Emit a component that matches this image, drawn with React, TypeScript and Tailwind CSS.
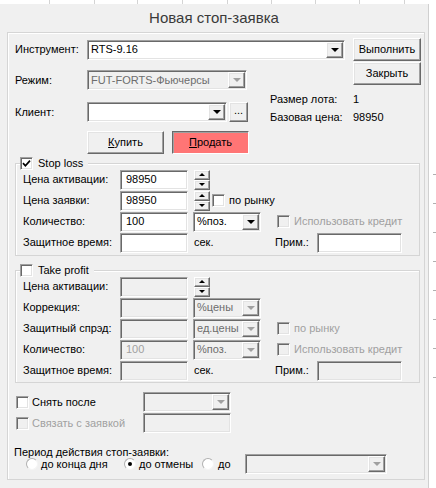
import type { ReactNode } from "react";

// classic win32 3D edges
const sunken =
  "border border-t-[#a0a0a0] border-l-[#a0a0a0] border-b-white border-r-white shadow-[inset_1px_1px_0_#696969,inset_-1px_-1px_0_#e3e3e3]";
const raised =
  "border border-t-white border-l-white border-b-[#696969] border-r-[#696969] shadow-[inset_-1px_-1px_0_#a0a0a0,inset_1px_1px_0_#e3e3e3] bg-[#f0f0f0]";

function Arrow({ disabled, up }: { disabled?: boolean; up?: boolean }) {
  if (up) {
    return (
      <div className="w-0 h-0 border-l-[3px] border-r-[3px] border-b-[3px] border-l-transparent border-r-transparent border-b-black" />
    );
  }
  return (
    <div
      className={
        disabled
          ? "w-0 h-0 border-l-[4px] border-r-[4px] border-t-[4px] border-l-transparent border-r-transparent border-t-[#a0a0a0]"
          : "w-0 h-0 border-l-[4px] border-r-[4px] border-t-[4px] border-l-transparent border-r-transparent border-t-black"
      }
    />
  );
}

function Combo({ w, value, disabled }: { w: string; value?: string; disabled?: boolean }) {
  return (
    <div
      className={`${w} h-[20px] shrink-0 flex items-center ${sunken} ${
        disabled ? "bg-[#f0f0f0] text-[#6d6d6d]" : "bg-white text-black"
      }`}
    >
      <span className="flex-1 pl-[3px] whitespace-nowrap overflow-hidden">{value}</span>
      <div className={`w-[17px] h-[16px] mr-[1px] flex items-center justify-center ${raised}`}>
        <Arrow disabled={disabled} />
      </div>
    </div>
  );
}

function Input({ w, value, disabled }: { w: string; value?: string; disabled?: boolean }) {
  return (
    <div
      className={`${w} h-[20px] shrink-0 flex items-center pl-[5px] ${sunken} ${
        disabled ? "bg-[#f0f0f0] text-[#a0a0a0]" : "bg-white text-black"
      }`}
    >
      {value}
    </div>
  );
}

function Spin() {
  return (
    <div className="w-[16px] h-[20px] shrink-0 flex flex-col">
      <div className={`h-[10px] flex items-center justify-center ${raised}`}>
        <Arrow up />
      </div>
      <div className={`h-[10px] flex items-center justify-center ${raised}`}>
        <div className="w-0 h-0 border-l-[3px] border-r-[3px] border-t-[3px] border-l-transparent border-r-transparent border-t-black" />
      </div>
    </div>
  );
}

function Check({ checked, disabled }: { checked?: boolean; disabled?: boolean }) {
  return (
    <div
      className={`w-[13px] h-[13px] shrink-0 flex items-center justify-center ${sunken} ${
        disabled ? "bg-[#f0f0f0]" : "bg-white"
      }`}
    >
      {checked && (
        <svg width="9" height="9" viewBox="0 0 9 9">
          <path d="M1 4.2 L3.4 6.8 L8 1.6" stroke="#000" strokeWidth="1.7" fill="none" />
        </svg>
      )}
    </div>
  );
}

function Radio({ checked }: { checked?: boolean }) {
  return (
    <div className="w-[12px] h-[12px] shrink-0 rounded-full bg-white border border-t-[#b0b0b0] border-l-[#b0b0b0] border-b-[#f4f4f4] border-r-[#f4f4f4] flex items-center justify-center">
      {checked && <div className="w-[4px] h-[4px] rounded-full bg-black" />}
    </div>
  );
}

function Row({ label, children }: { label: string; children: ReactNode }) {
  return (
    <div className="h-[21px] flex items-center">
      <span className="w-[97px] shrink-0">{label}</span>
      {children}
    </div>
  );
}

function Group({ title, checked, children, h }: { title: string; checked?: boolean; children: ReactNode; h: string }) {
  return (
    <div
      className={`relative w-[405px] ${h} border border-[#d5d5d5] shadow-[inset_1px_1px_0_#ffffff] pl-[7px] pt-[5px]`}
    >
      <div className="absolute top-[-7px] left-[4px] flex items-center bg-[#f0f0f0] pr-[5px]">
        <Check checked={checked} />
        <span className="ml-[5px] leading-[13px]">{title}</span>
      </div>
      {children}
    </div>
  );
}

const GRID = [50, 45, 43, 45, 45, 44, 44, 44, 45];

export default function App() {
  return (
    <div className="w-[436px] h-[488px] bg-white flex flex-col overflow-hidden font-['Liberation_Sans',Arial,sans-serif] text-[11px] text-black">
      <div className="h-[4px] flex shrink-0">
        {GRID.map((w, i) => (
          <div key={i} className="h-full border-r border-[#d4d4d4]" style={{ width: w }} />
        ))}
      </div>

      <div className="flex flex-1">
        <div className="w-[429px] h-[484px] bg-[#f0f0f0] border-r border-[#d0d0d0] flex flex-col">
          <div className="h-[28px] flex items-center justify-center text-[15px] text-[#3a3a3a]">
            Новая стоп-заявка
          </div>

          <div className="ml-[7px] w-[418px] h-[448px] border border-[#d5d5d5] shadow-[inset_1px_1px_0_#ffffff] pl-[7px] flex flex-col">
            {/* instrument */}
            <div className="mt-[5px] h-[23px] flex items-center">
              <span className="w-[72px]">Инструмент:</span>
              <Combo w="w-[258px]" value="RTS-9.16" />
              <button className={`ml-[8px] w-[68px] h-[23px] ${raised}`}>Выполнить</button>
            </div>

            {/* mode */}
            <div className="h-[29px] flex items-start">
              <div className="mt-[9px] flex items-center">
                <span className="w-[72px]">Режим:</span>
                <Combo w="w-[160px]" value="FUT-FORTS-Фьючерсы" disabled />
              </div>
              <button className={`ml-[106px] mt-[1px] w-[68px] h-[23px] ${raised}`}>Закрыть</button>
            </div>

            {/* client + info */}
            <div className="h-[32px] flex items-start">
              <div className="mt-[12px] flex items-center">
                <span className="w-[72px]">Клиент:</span>
                <Combo w="w-[140px]" />
                <button className={`ml-[2px] w-[19px] h-[20px] leading-none pb-[3px] ${raised}`}>...</button>
              </div>
              <div className="ml-[22px] leading-[18px]">
                <div className="flex">
                  <span className="w-[83px]">Размер лота:</span>
                  <span>1</span>
                </div>
                <div className="flex">
                  <span className="w-[83px]">Базовая цена:</span>
                  <span>98950</span>
                </div>
              </div>
            </div>

            {/* buy / sell */}
            <div className="mt-[9px] h-[23px] flex items-center pl-[72px] gap-[8px]">
              <button className={`w-[77px] h-[23px] ${raised}`}>
                <span className="underline">К</span>упить
              </button>
              <button className="w-[77px] h-[23px] bg-[#ff7575] border border-t-[#696969] border-l-[#696969] border-b-white border-r-white shadow-[inset_1px_1px_0_#a0a0a0]">
                <span className="underline">П</span>родать
              </button>
            </div>

            {/* stop loss */}
            <div className="mt-[9px]">
              <Group title="Stop loss" checked h="h-[93px]">
                <Row label="Цена активации:">
                  <Input w="w-[68px]" value="98950" />
                  <div className="ml-[6px]">
                    <Spin />
                  </div>
                </Row>
                <Row label="Цена заявки:">
                  <Input w="w-[68px]" value="98950" />
                  <div className="ml-[6px]">
                    <Spin />
                  </div>
                  <div className="ml-[2px]">
                    <Check />
                  </div>
                  <span className="ml-[4px]">по рынку</span>
                </Row>
                <Row label="Количество:">
                  <Input w="w-[68px]" value="100" />
                  <div className="ml-[5px]">
                    <Combo w="w-[68px]" value="%поз." />
                  </div>
                  <div className="ml-[16px]">
                    <Check disabled />
                  </div>
                  <span className="ml-[4px] text-[#a0a0a0]">Использовать кредит</span>
                </Row>
                <Row label="Защитное время:">
                  <Input w="w-[68px]" />
                  <span className="ml-[6px] w-[81px]">сек.</span>
                  <span className="w-[42px]">Прим.:</span>
                  <Input w="w-[85px]" />
                </Row>
              </Group>
            </div>

            {/* take profit */}
            <div className="mt-[14px]">
              <Group title="Take profit" h="h-[113px]">
                <Row label="Цена активации:">
                  <Input w="w-[68px]" disabled />
                  <div className="ml-[6px]">
                    <Spin />
                  </div>
                </Row>
                <Row label="Коррекция:">
                  <Input w="w-[68px]" disabled />
                  <div className="ml-[5px]">
                    <Combo w="w-[68px]" value="%цены" disabled />
                  </div>
                </Row>
                <Row label="Защитный спрэд:">
                  <Input w="w-[68px]" disabled />
                  <div className="ml-[5px]">
                    <Combo w="w-[68px]" value="ед.цены" disabled />
                  </div>
                  <div className="ml-[16px]">
                    <Check disabled />
                  </div>
                  <span className="ml-[4px] text-[#a0a0a0]">по рынку</span>
                </Row>
                <Row label="Количество:">
                  <Input w="w-[68px]" value="100" disabled />
                  <div className="ml-[5px]">
                    <Combo w="w-[68px]" value="%поз." disabled />
                  </div>
                  <div className="ml-[16px]">
                    <Check disabled />
                  </div>
                  <span className="ml-[4px] text-[#a0a0a0]">Использовать кредит</span>
                </Row>
                <Row label="Защитное время:">
                  <Input w="w-[68px]" disabled />
                  <span className="ml-[6px] w-[81px]">сек.</span>
                  <span className="w-[42px]">Прим.:</span>
                  <Input w="w-[85px]" disabled />
                </Row>
              </Group>
            </div>

            {/* cancel after / link */}
            <div className="mt-[9px] h-[20px] flex items-center">
              <div className="w-[128px] flex items-center pl-[1px]">
                <Check />
                <span className="ml-[3px]">Снять после</span>
              </div>
              <Combo w="w-[88px]" disabled />
            </div>
            <div className="mt-[1px] h-[20px] flex items-center">
              <div className="w-[128px] flex items-center pl-[1px]">
                <Check disabled />
                <span className="ml-[3px] text-[#a0a0a0]">Связать с заявкой</span>
              </div>
              <Input w="w-[88px]" disabled />
            </div>

            {/* period */}
            <div className="mt-[12px] h-[9px] leading-[14px] -ml-[1px] whitespace-nowrap">
              Период действия стоп-заявки:
            </div>
            <div className="h-[20px] flex items-center pl-[11px]">
              <div className="w-[98px] flex items-center">
                <Radio />
                <span className="ml-[3px]">до конца дня</span>
              </div>
              <div className="w-[78px] flex items-center">
                <Radio checked />
                <span className="ml-[3px]">до отмены</span>
              </div>
              <div className="w-[43px] flex items-center">
                <Radio />
                <span className="ml-[4px]">до</span>
              </div>
              <Combo w="w-[142px]" disabled />
            </div>
          </div>
        </div>

        <div className="w-[7px] flex flex-col items-end pt-[170px] gap-[28px]">
          <div className="w-[3px] h-[1px] bg-[#b0b0b0]" />
          <div className="w-[3px] h-[1px] bg-[#b0b0b0]" />
          <div className="w-[3px] h-[1px] bg-[#b0b0b0]" />
          <div className="w-[3px] h-[1px] bg-[#b0b0b0]" />
          <div className="w-[3px] h-[1px] bg-[#b0b0b0]" />
          <div className="w-[3px] h-[1px] bg-[#b0b0b0]" />
          <div className="w-[3px] h-[1px] bg-[#b0b0b0]" />
          <div className="w-[3px] h-[1px] bg-[#b0b0b0]" />
        </div>
      </div>
    </div>
  );
}
